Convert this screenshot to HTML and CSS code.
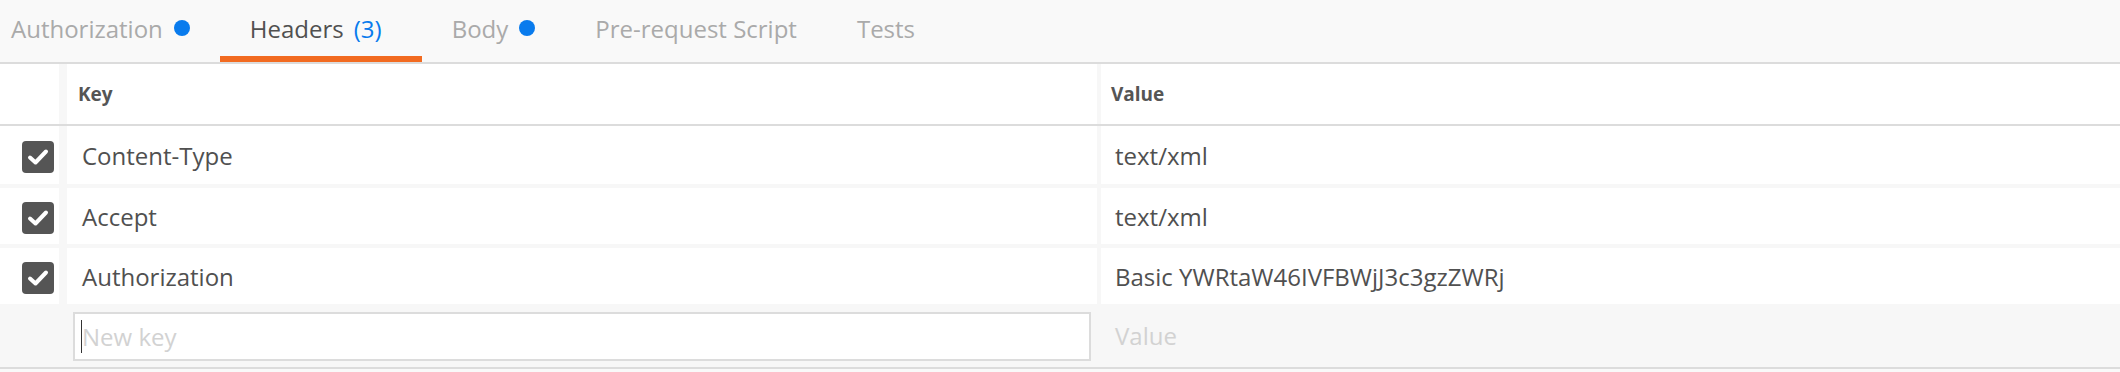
FILE: index.html
```html
<!DOCTYPE html>
<html>
<head>
<link rel="stylesheet" href="styles.css">
</head>
<body>

<!-- request tabs -->
<div class="tabs">
  <div class="tab"><span>Authorization</span><span class="dot"></span></div>
  <div class="tab active"><span>Headers</span><span class="count">(3)</span></div>
  <div class="tab"><span>Body</span><span class="dot"></span></div>
  <div class="tab"><span>Pre-request Script</span></div>
  <div class="tab"><span>Tests</span></div>
</div>

<!-- headers table -->
<div class="table">
  <div class="row head">
    <div class="cell check"></div>
    <div class="cell key">Key</div>
    <div class="cell value">Value</div>
  </div>

  <div class="row first">
    <div class="cell check"><span class="box"><svg viewBox="0 0 32 32"><polyline points="8,16.5 13.5,21.5 24,10.5"/></svg></span></div>
    <div class="cell key">Content-Type</div>
    <div class="cell value">text/xml</div>
  </div>

  <div class="row">
    <div class="cell check"><span class="box"><svg viewBox="0 0 32 32"><polyline points="8,16.5 13.5,21.5 24,10.5"/></svg></span></div>
    <div class="cell key">Accept</div>
    <div class="cell value">text/xml</div>
  </div>

  <div class="row">
    <div class="cell check"><span class="box"><svg viewBox="0 0 32 32"><polyline points="8,16.5 13.5,21.5 24,10.5"/></svg></span></div>
    <div class="cell key">Authorization</div>
    <div class="cell value">Basic YWRtaW46IVFBWjJ3c3gzZWRj</div>
  </div>

  <div class="row new">
    <div class="cell check"></div>
    <div class="cell key"><div class="newkey"><span class="caret"></span><span class="ph">New key</span></div></div>
    <div class="cell value"><span class="ph">Value</span></div>
  </div>
</div>

</body>
</html>
```

FILE: styles.css
```css
body {
  margin: 0;
  background-color: #f9f9f9;
  font-family: "Open Sans", "Liberation Sans", sans-serif;
  font-size: 24px;
  color: #505050;
}

/* tab strip on top */
.tabs {
  display: flex;
  height: 64px;
  box-sizing: border-box;
  background-color: #f9f9f9;
  border-bottom: 2px solid #dcdcdc;
}
.tab {
  display: flex;
  align-items: center;
  height: 62px;
  box-sizing: border-box;
  padding: 0 30px;
  border-bottom: 6px solid transparent;
  color: #aaaaaa;
  white-space: pre;
}
.tab:first-child {
  padding-left: 11px;
}
.tab.active {
  color: #505050;
  border-bottom-color: #f26b21;
}
.count {
  color: #097bed;
  margin: 0 10px 0 10px;
}
.dot {
  display: inline-block;
  width: 16px;
  height: 16px;
  margin-left: 11px;
  border-radius: 50%;
  background-color: #097bed;
}

/* table */
.table {
  background-color: #f7f7f7;
  border-bottom: 2px solid #dcdcdc;
}
.row {
  display: grid;
  grid-template-columns: 59px 1038px 1fr;
  height: 60px;
  box-sizing: border-box;
  padding-top: 4px;
}
.row.first {
  height: 58px;
  padding-top: 0;
}
.cell {
  display: flex;
  align-items: center;
  background-color: #ffffff;
  white-space: pre;
}
.cell.key {
  border-left: 8px solid #f7f7f7;
  padding-left: 15px;
}
.cell.value {
  border-left: 4px solid #f7f7f7;
  padding-left: 14px;
}

.row.head {
  height: 62px;
  padding-top: 0;
  border-bottom: 2px solid #dcdcdc;
}
.row.head .cell {
  font-size: 19px;
  font-weight: bold;
  color: #555555;
}
.row.head .key {
  padding-left: 11px;
}
.row.head .value {
  padding-left: 10px;
}

/* checkbox */
.box {
  display: block;
  width: 32px;
  height: 32px;
  margin: 4px 0 0 22px;
  border-radius: 4px;
  background-color: #555555;
}
.box svg {
  display: block;
  width: 32px;
  height: 32px;
  fill: none;
  stroke: #ffffff;
  stroke-width: 4;
  stroke-linecap: round;
  stroke-linejoin: round;
}

/* empty row for new header */
.row.new {
  height: 63px;
  padding-top: 0;
}
.row.new .cell {
  background-color: #f7f7f7;
}
.row.new .key {
  padding: 0 6px;
  align-items: flex-start;
}
.newkey {
  display: flex;
  align-items: center;
  width: 100%;
  height: 49px;
  margin-top: 8px;
  box-sizing: border-box;
  padding-left: 6px;
  border: 2px solid #dcdcdc;
  background-color: #ffffff;
}
.caret {
  display: block;
  width: 1px;
  height: 33px;
  background-color: #333333;
}
.ph {
  color: #d2d2d2;
}
```
